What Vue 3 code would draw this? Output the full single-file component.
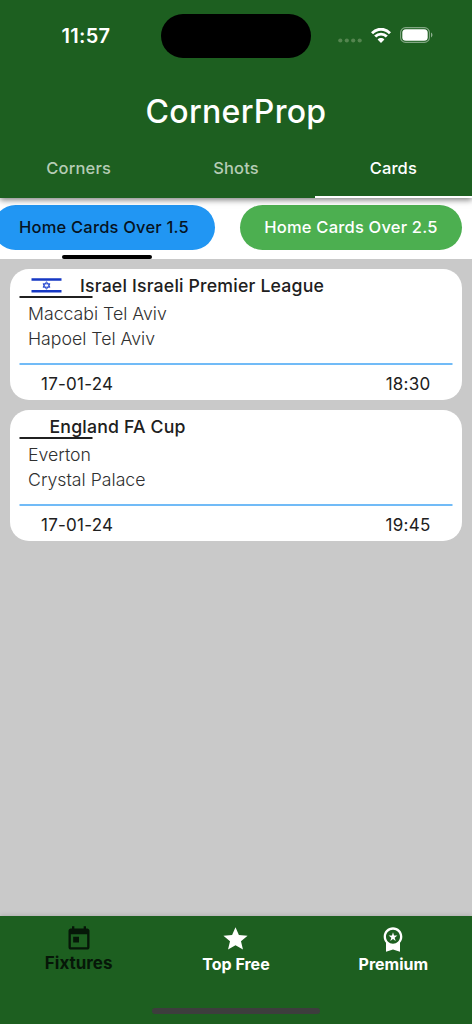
<script setup>
const tabs = [
  { label: 'Corners', active: false },
  { label: 'Shots', active: false },
  { label: 'Cards', active: true },
]
const chips = [
  { label: 'Home Cards Over 1.5', active: true },
  { label: 'Home Cards Over 2.5', active: false },
]
const fixtures = [
  { league: 'Israel Israeli Premier League', flag: true, home: 'Maccabi Tel Aviv', away: 'Hapoel Tel Aviv', date: '17-01-24', time: '18:30' },
  { league: 'England FA Cup', flag: false, home: 'Everton', away: 'Crystal Palace', date: '17-01-24', time: '19:45' },
]
</script>

<template>
  <div class="screen">
    <header class="header">
      <div class="status">
        <div class="clock">11:57</div>
        <div class="island"></div>
        <div class="signals">
          <svg class="dots" width="24" height="5" viewBox="0 0 24 5">
            <circle cx="2.3" cy="2.5" r="2.1" /><circle cx="8.8" cy="2.5" r="2.1" /><circle cx="15.2" cy="2.5" r="2.1" /><circle cx="21.7" cy="2.5" r="2.1" />
          </svg>
          <svg class="wifi" width="20" height="15" viewBox="0 0 20 15">
            <g fill="none" stroke="#fff" stroke-width="2.9">
              <path d="M1 5.2C6-.1 14-.1 19 5.2" />
              <path d="M4.2 8.6c3.2-3.3 8.4-3.3 11.6 0" />
            </g>
            <path d="M10 14.9 6.6 11.5c1.9-1.9 4.9-1.9 6.8 0z" fill="#fff" />
          </svg>
          <svg class="battery" width="33" height="16" viewBox="0 0 33 16">
            <rect x=".6" y=".6" width="28.8" height="14.8" rx="5" fill="none" stroke="#fff" stroke-opacity=".45" stroke-width="1.1" />
            <rect x="2.3" y="2.3" width="25.4" height="11.4" rx="3.5" fill="#fff" />
            <path d="M31 5.6c1.9.7 1.9 4.1 0 4.8z" fill="#fff" fill-opacity=".5" />
          </svg>
        </div>
      </div>
      <h1 class="title">CornerProp</h1>
      <nav class="tabs">
        <div v-for="t in tabs" :key="t.label" class="tab" :class="{ active: t.active }"><span>{{ t.label }}</span></div>
      </nav>
    </header>

    <section class="chips">
      <div v-for="c in chips" :key="c.label" class="chip" :class="{ active: c.active }"><span>{{ c.label }}</span></div>
    </section>

    <main class="list">
      <article v-for="f in fixtures" :key="f.league" class="card">
        <div class="league" :class="{ flagged: f.flag }">
          <svg v-if="f.flag" class="flag" width="31" height="15" viewBox="0 0 31 15">
            <path d="M.5 1.5h30M.5 13.2h30" stroke="#1638c4" stroke-width="2.4" />
            <path d="M15.5 3.7l3.5 5.5h-7zM15.5 11.3l-3.5-5.5h7z" fill="none" stroke="#2a4bd0" stroke-width="1" />
          </svg>
          <span class="name">{{ f.league }}</span>
          <svg class="rule" width="74" height="2" viewBox="0 0 74 2"><path d="M.5 1h73" stroke="#202020" stroke-width="1.8" /></svg>
        </div>
        <div class="teams"><div>{{ f.home }}</div><div>{{ f.away }}</div></div>
        <svg class="divider" width="434" height="2" viewBox="0 0 434 2"><path d="M.5 1h433" stroke="#42a5f5" stroke-width="1.6" /></svg>
        <div class="when"><span>{{ f.date }}</span><span>{{ f.time }}</span></div>
      </article>
    </main>

    <footer class="bottom">
      <div class="item current">
        <svg width="28" height="28" viewBox="0 0 24 24"><path fill="currentColor" d="M19 3h-1V1h-2v2H8V1H6v2H5c-1.11 0-1.99.9-1.99 2L3 19c0 1.1.89 2 2 2h14c1.1 0 2-.9 2-2V5c0-1.1-.9-2-2-2zm0 16H5V8h14v11zM7 10h5v5H7z" /></svg>
        <span>Fixtures</span>
      </div>
      <div class="item">
        <svg width="29" height="28" viewBox="0 0 24 24" preserveAspectRatio="none"><path fill="currentColor" d="M12 17.27 18.18 21l-1.64-7.03L22 9.24l-7.19-.61L12 2 9.19 8.63 2 9.24l5.46 4.73L5.82 21z" /></svg>
        <span>Top Free</span>
      </div>
      <div class="item">
        <svg width="28" height="28" viewBox="0 0 24 24"><path fill="currentColor" d="M9.68 13.69 12 11.93l2.31 1.76-.88-2.85L15.75 9h-2.84L12 6.19 11.09 9H8.25l2.31 1.84-.88 2.85zM20 10c0-4.42-3.58-8-8-8s-8 3.58-8 8c0 2.03.76 3.87 2 5.28V23l6-2 6 2v-7.72c1.24-1.41 2-3.25 2-5.28zm-8-6c3.31 0 6 2.69 6 6s-2.69 6-6 6-6-2.69-6-6 2.69-6 6-6z" /></svg>
        <span>Premium</span>
      </div>
      <div class="home-indicator"></div>
    </footer>
  </div>
</template>

<style>
body { overflow: hidden; }
</style>

<style scoped>
.screen {
  width: 472px;
  height: 1024px;
  display: flex;
  flex-direction: column;
  overflow: hidden;
  background: #c9c9c9;
  font-family: Inter, "Liberation Sans", sans-serif;
  color: #202020;
}
.header {
  position: relative;
  z-index: 1;
  flex: none;
  height: 198px;
  box-sizing: border-box;
  background: #1d5f20;
  color: #fff;
  box-shadow: 0 2px 6px rgba(0, 0, 0, .5);
  display: flex;
  flex-direction: column;
}
.status {
  height: 72px;
  flex: none;
  display: grid;
  grid-template-columns: 161px 150px 161px;
}
.clock {
  padding: 24px 0 0 61.5px;
  font-size: 20px;
  line-height: 25px;
  font-weight: 600;
  letter-spacing: .3px;
}
.island { margin-top: 14px; height: 44px; border-radius: 22px; background: #000; }
.signals { display: flex; padding: 27px 0 0 27px; }
.dots { margin-top: 11px; fill: #54854f; }
.wifi { margin-left: 9px; margin-top: .5px; }
.battery { margin-left: 9px; }
.title {
  margin: 0;
  height: 78px;
  line-height: 80px;
  text-align: center;
  font-size: 32px;
  font-weight: 500;
  letter-spacing: .3px;
}
.tabs { flex: 1; display: grid; grid-template-columns: repeat(3, 1fr); }
.tab {
  box-sizing: border-box;
  border-bottom: 2px solid transparent;
  padding-top: 6px;
  line-height: 24px;
  text-align: center;
  font-size: 16.5px;
  font-weight: 500;
  letter-spacing: .15px;
  color: #b5ccb5;
}
.tab.active { color: #fff; border-bottom-color: #fff; }
.chips {
  flex: none;
  height: 60.5px;
  box-sizing: border-box;
  padding-top: 7px;
  background: #fff;
  display: flex;
  justify-content: flex-end;
  gap: 25px;
  padding-right: 10px;
}
.chip {
  position: relative;
  flex: none;
  width: 222px;
  height: 44.5px;
  border-radius: 23px;
  background: #4caf50;
  color: #fff;
  text-align: center;
  font-size: 16.5px;
  line-height: 44.5px;
  font-weight: 500;
  letter-spacing: .2px;
}
.chip.active { background: #2196f3; color: #06131f; }
.chip.active::after {
  content: "";
  position: absolute;
  left: 69px;
  top: 50px;
  width: 90px;
  height: 3.5px;
  border-radius: 2px;
  background: #000;
}
.list { flex: 1; padding: 10.7px 10px 0; display: flex; flex-direction: column; gap: 9.5px; }
.card {
  box-sizing: border-box;
  height: 131px;
  padding: 0 9px;
  border-radius: 19px;
  background: #fff;
}
.league {
  position: relative;
  height: 29px;
  display: flex;
  padding-left: 30.5px;
  font-size: 17.7px;
  line-height: 33px;
  font-weight: 500;
  letter-spacing: .18px;
}
.league.flagged { padding-left: 12px; gap: 18px; }
.rule { position: absolute; left: 0; bottom: 0; }
.flag { margin-top: 9px; flex: none; }
.name { white-space: nowrap; }
.teams {
  height: 65px;
  box-sizing: border-box;
  padding: 3px 0 0 9px;
  font-size: 17.7px;
  line-height: 25.3px;
  font-weight: 300;
  color: #303030;
}
.divider { display: block; }
.when {
  display: flex;
  justify-content: space-between;
  padding: 0 22.5px 0 22px;
  font-size: 17px;
  line-height: 38px;
  font-weight: 400;
  letter-spacing: .25px;
}
.bottom {
  position: relative;
  flex: none;
  height: 108.5px;
  display: grid;
  grid-template-columns: repeat(3, 1fr);
  background: #1d5f20;
  color: #fff;
  box-shadow: 0 -1px 4px rgba(0, 0, 0, .12);
}
.item { display: flex; flex-direction: column; align-items: center; padding-top: 9.5px; }
.item span { font-size: 16px; line-height: 22px; font-weight: 700; }
.item svg { display: block; }
.item.current { color: #061708; }
.item.current span { font-size: 17px; line-height: 21px; }
.home-indicator {
  position: absolute;
  left: 152px;
  bottom: 10px;
  width: 168px;
  height: 6px;
  border-radius: 3px;
  background: #3d3d3d;
}
</style>
